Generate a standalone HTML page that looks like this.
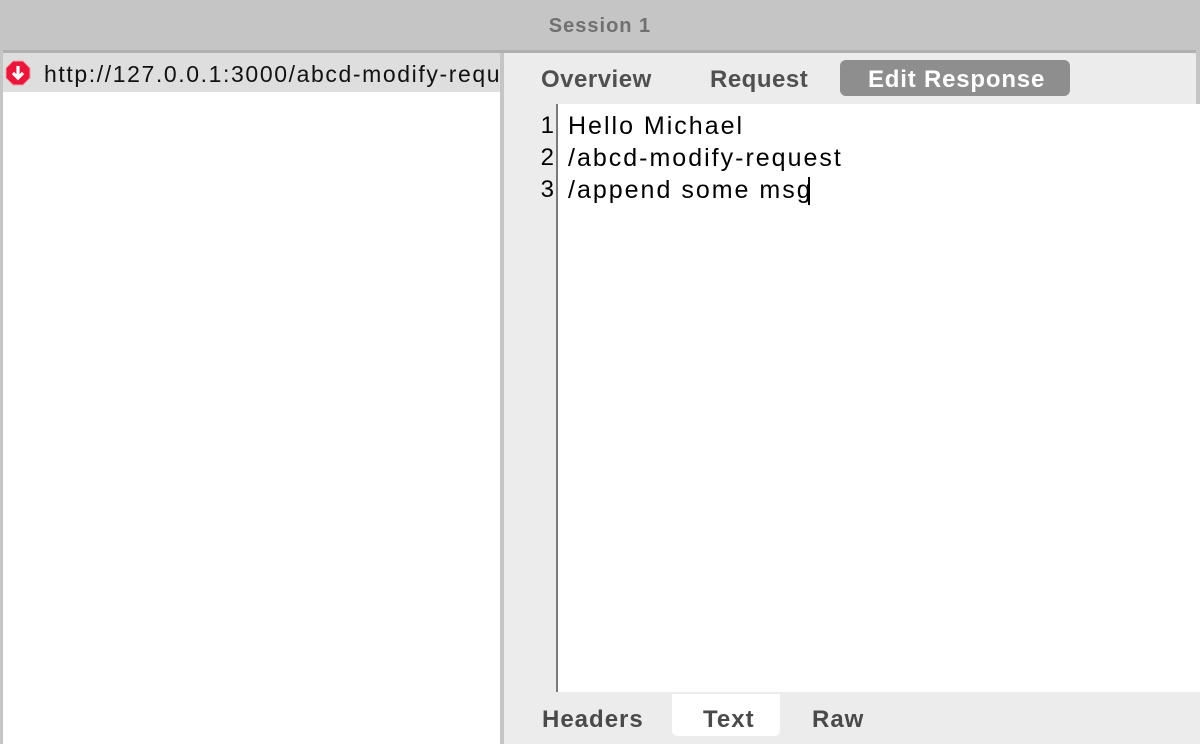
<!DOCTYPE html>
<html><head><style>
*{margin:0;padding:0;box-sizing:border-box}
body{width:1200px;height:744px;overflow:hidden;background:#fff;font-family:"Liberation Sans",sans-serif;position:relative}
.abs{position:absolute}
</style></head><body>
<div class="abs" style="left:0;top:0;width:1200px;height:50px;background:#c5c5c5"></div>
<div class="abs" style="left:0;top:15px;width:1200px;text-align:center;font-size:20px;font-weight:bold;color:#707070;letter-spacing:1px">Session 1</div>
<div class="abs" style="left:0;top:50px;width:1200px;height:3px;background:#b0b0b0"></div>
<div class="abs" style="left:0;top:50px;width:3px;height:694px;background:#c5c5c5"></div>
<div class="abs" style="left:1196px;top:50px;width:4px;height:54px;background:#c5c5c5"></div>
<div class="abs" style="left:3px;top:53px;width:497px;height:39px;background:#dedede"></div>
<svg class="abs" style="left:5px;top:60px" width="26" height="26" viewBox="0 0 26 26"><polygon points="8,1 18,1 25,8 25,18 18,25 8,25 1,18 1,8" fill="#e8173b" stroke="#f0a0a8"/><path d="M13 6v11M8 13l5 5 5-5" stroke="#fff" stroke-width="3.2" fill="none"/></svg>
<div class="abs" style="left:44px;top:61px;font-size:23px;color:#111;white-space:nowrap;width:456px;overflow:hidden;letter-spacing:1.6px">http://127.0.0.1:3000/abcd-modify-request</div>
<div class="abs" style="left:500px;top:53px;width:4px;height:691px;background:#c5c5c5"></div>
<div class="abs" style="left:504px;top:53px;width:692px;height:51px;background:#ececec"></div>
<div class="abs" style="left:541px;top:66px;font-size:24px;font-weight:bold;color:#505050;letter-spacing:0.5px">Overview</div>
<div class="abs" style="left:710px;top:66px;font-size:24px;font-weight:bold;color:#505050;letter-spacing:0.5px">Request</div>
<div class="abs" style="left:840px;top:60px;width:230px;height:36px;background:#8e8e8e;border-radius:6px"></div>
<div class="abs" style="left:868px;top:66px;font-size:24px;font-weight:bold;color:#fff;letter-spacing:0.8px">Edit Response</div>
<div class="abs" style="left:504px;top:104px;width:52px;height:588px;background:#ececec"></div>
<div class="abs" style="left:556px;top:104px;width:2px;height:588px;background:#7a7a7a"></div>
<div class="abs" style="left:504px;top:110px;width:50px;text-align:right;font-size:24px;line-height:32px;color:#000">1<br>2<br>3</div>
<div class="abs" style="left:568px;top:110px;font-size:25px;line-height:32px;color:#000;letter-spacing:2px">Hello Michael<br>/abcd-modify-request<br>/append some msg</div>
<div class="abs" style="left:808px;top:177px;width:2px;height:28px;background:#000"></div>
<div class="abs" style="left:504px;top:692px;width:696px;height:52px;background:#ececec"></div>
<div class="abs" style="left:672px;top:694px;width:108px;height:42px;background:#fff;border-radius:0 0 6px 6px"></div>
<div class="abs" style="left:542px;top:706px;font-size:24px;font-weight:bold;color:#4a4a4a;letter-spacing:1px">Headers</div>
<div class="abs" style="left:703px;top:706px;font-size:24px;font-weight:bold;color:#4a4a4a;letter-spacing:1px">Text</div>
<div class="abs" style="left:812px;top:706px;font-size:24px;font-weight:bold;color:#4a4a4a;letter-spacing:1px">Raw</div>
</body></html>
